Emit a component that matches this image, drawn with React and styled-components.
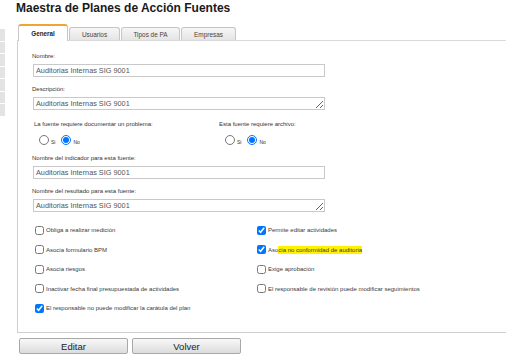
import React from 'react'
import styled, { createGlobalStyle } from 'styled-components'

const GlobalStyle = createGlobalStyle`
  body {
    margin: 0;
    background: #ffffff;
    font-family: 'Liberation Sans', Arial, sans-serif;
    color: #333333;
    overflow: hidden;
  }
`

const Page = styled.div`
  display: flex;
  width: 506px;
  height: 358px;
`
const SideStub = styled.div`
  width: 5px;
  padding-top: 29px;
  display: flex;
  flex-direction: column;
  gap: 1px;
`
const SideRow = styled.div`
  height: 11.5px;
  background: #e3e3e3;
`
const Main = styled.div`
  flex: 1;
  min-width: 0;
  padding-left: 12px;
`
const Title = styled.h1`
  margin: 0 0 8px -1px;
  font-size: 12px;
  line-height: 16px;
  font-weight: bold;
  color: #1a1a1a;
`
const TabBar = styled.div`
  display: flex;
  align-items: flex-end;
  gap: 1px;
  height: 16px;
  padding-left: 1px;
  border-bottom: 1px solid #d9d9d9;
`
const Tab = styled.div`
  box-sizing: border-box;
  width: ${(p) => p.$w}px;
  height: ${(p) => (p.$active ? 17 : 13)}px;
  margin-bottom: ${(p) => (p.$active ? -1 : 0)}px;
  display: flex;
  align-items: center;
  justify-content: center;
  border: 1px solid #c6c6c6;
  border-bottom: none;
  border-top: ${(p) => (p.$active ? '2px solid #f0a531' : '1px solid #c6c6c6')};
  border-radius: 3px 3px 0 0;
  background: ${(p) => (p.$active ? '#ffffff' : 'linear-gradient(#f6f6f6, #e4e4e4)')};
  font-size: ${(p) => (p.$active ? 6.3 : 6.4)}px;
  font-weight: ${(p) => (p.$active ? 'bold' : 'normal')};
  color: ${(p) => (p.$active ? '#222' : '#444')};
`
const Panel = styled.div`
  display: flex;
  flex-direction: column;
  border-left: 1px solid #cfcfcf;
  border-bottom: 1px solid #cfcfcf;
  padding: 11px 0 19px 14px;
`
const Label = styled.div`
  font-size: 6px;
  line-height: 8px;
  color: #333;
  margin-bottom: 4px;
`
const Field = styled.div`
  display: flex;
  flex-direction: column;
  margin-top: ${(p) => p.$top || 0}px;
`
const TextInput = styled.input`
  box-sizing: border-box;
  width: 292px;
  height: 13px;
  margin: 0 0 0 1px;
  padding: 0 2px;
  border: 1px solid #c9c9c9;
  font-family: 'Liberation Sans', Arial, sans-serif;
  font-size: 7.3px;
  color: #555;
  outline: none;
`
const TextArea = styled.textarea`
  box-sizing: border-box;
  width: 292px;
  height: 13px;
  margin: 0 0 0 1px;
  padding: 1px 2px 0;
  border: 1px solid #c9c9c9;
  font-family: 'Liberation Sans', Arial, sans-serif;
  font-size: 7.3px;
  line-height: 9px;
  color: #555;
  overflow: hidden;
  outline: none;
`
const RadioGrid = styled.div`
  display: grid;
  grid-template-columns: 185px auto;
  margin-top: 10px;
  padding-left: 2px;
`
const Question = styled.div`
  display: flex;
  flex-direction: column;
`
const Options = styled.div`
  display: flex;
  align-items: flex-end;
  height: 10px;
  margin-top: 3px;
  padding-left: ${(p) => p.$indent}px;
`
const Radio = styled.input`
  width: 10px;
  height: 10px;
  margin: 0;
`
const OptionText = styled.span`
  font-size: 5px;
  line-height: 6px;
  margin: 0 6px 0 2px;
  color: #333;
`
const CheckGrid = styled.div`
  display: grid;
  grid-template-columns: 222px auto;
  row-gap: 9.5px;
  margin-top: 13px;
  padding-left: 3px;
`
const CheckItem = styled.label`
  display: flex;
  align-items: center;
  height: 10px;
  font-size: 6px;
  color: #3a3a3a;
`
const Check = styled.input`
  width: 9px;
  height: 9px;
  margin: 0 2px 0 0;
`
const Mark = styled.span`
  background: #fff200;
  padding: 1px 0;
`
const ButtonRow = styled.div`
  display: flex;
  gap: 4px;
  margin-top: 5px;
  padding-left: 2px;
`
const Button = styled.button`
  box-sizing: border-box;
  width: 109px;
  height: 16px;
  padding: 0;
  border: 1px solid #a9a9a9;
  border-radius: 2px;
  background: linear-gradient(#f8f8f8, #dcdcdc);
  font-family: 'Liberation Sans', Arial, sans-serif;
  font-size: 9.5px;
  color: #222;
`

const tabs = [
  { name: 'General', w: 50, active: true },
  { name: 'Usuarios', w: 51 },
  { name: 'Tipos de PA', w: 59 },
  { name: 'Empresas', w: 55 },
]

const NAME = 'Auditorias Internas SIG 9001'

function YesNo({ label, group, indent }) {
  return (
    <Question>
      <Label>{label}</Label>
      <Options $indent={indent}>
        <Radio type='radio' name={group} />
        <OptionText>Si</OptionText>
        <Radio type='radio' name={group} defaultChecked />
        <OptionText>No</OptionText>
      </Options>
    </Question>
  )
}

export default function App() {
  return (
    <Page>
      <GlobalStyle />
      <SideStub>
        {[0, 1, 2, 3, 4, 5, 6].map((i) => (
          <SideRow key={i} />
        ))}
      </SideStub>
      <Main>
        <Title>Maestra de Planes de Acción Fuentes</Title>
        <TabBar>
          {tabs.map((t) => (
            <Tab key={t.name} $w={t.w} $active={t.active}>
              {t.name}
            </Tab>
          ))}
        </TabBar>
        <Panel>
          <Field>
            <Label>Nombre:</Label>
            <TextInput defaultValue={NAME} />
          </Field>
          <Field $top={8}>
            <Label>Descripción:</Label>
            <TextArea defaultValue={NAME} />
          </Field>
          <RadioGrid>
            <YesNo label='La fuente requiere documentar un problema:' group='doc' indent={5} />
            <YesNo label='Esta fuente requiere archivo:' group='arch' indent={6} />
          </RadioGrid>
          <Field $top={9}>
            <Label>Nombre del indicador para esta fuente:</Label>
            <TextInput defaultValue={NAME} />
          </Field>
          <Field $top={8}>
            <Label>Nombre del resultado para esta fuente:</Label>
            <TextArea defaultValue={NAME} />
          </Field>
          <CheckGrid>
            <CheckItem><Check type='checkbox' />Obliga a realizar medición</CheckItem>
            <CheckItem><Check type='checkbox' defaultChecked />Permite editar actividades</CheckItem>
            <CheckItem><Check type='checkbox' />Asocia formulario BPM</CheckItem>
            <CheckItem>
              <Check type='checkbox' defaultChecked />Aso<Mark>cia no conformidad de auditoria</Mark>
            </CheckItem>
            <CheckItem><Check type='checkbox' />Asocia riesgos</CheckItem>
            <CheckItem><Check type='checkbox' />Exige aprobación</CheckItem>
            <CheckItem><Check type='checkbox' />Inactivar fecha final presupuestada de actividades</CheckItem>
            <CheckItem><Check type='checkbox' />El responsable de revisión puede modificar seguimientos</CheckItem>
            <CheckItem><Check type='checkbox' defaultChecked />El responsable no puede modificar la carátula del plan</CheckItem>
          </CheckGrid>
        </Panel>
        <ButtonRow>
          <Button>Editar</Button>
          <Button>Volver</Button>
        </ButtonRow>
      </Main>
    </Page>
  )
}
